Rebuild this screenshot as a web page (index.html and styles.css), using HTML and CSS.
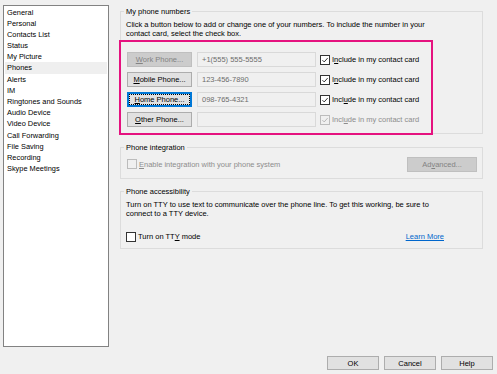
FILE: index.html
```html
<!DOCTYPE html>
<html>
<head>
<meta charset="utf-8">
<link rel="stylesheet" href="styles.css">
</head>
<body>
<div class="window">
  <div class="main">
    <ul class="nav">
      <li>General</li>
      <li>Personal</li>
      <li>Contacts List</li>
      <li>Status</li>
      <li>My Picture</li>
      <li class="selected">Phones</li>
      <li>Alerts</li>
      <li>IM</li>
      <li>Ringtones and Sounds</li>
      <li>Audio Device</li>
      <li>Video Device</li>
      <li>Call Forwarding</li>
      <li>File Saving</li>
      <li>Recording</li>
      <li>Skype Meetings</li>
    </ul>
    <div class="content">
      <fieldset class="group group-numbers">
        <legend>My phone numbers</legend>
        <p class="desc">Click a button below to add or change one of your numbers. To include the number in your contact card, select the check box.</p>
        <div class="phones">
          <div class="phone-row">
            <span class="btn btn-disabled btn-phone"><u>W</u>ork Phone...</span>
            <span class="field">+1(555) 555-5555</span>
            <span class="check checked"><svg viewBox="0 0 10 10"><path d="M1.8 5.2 L4 7.4 L8.3 2.6"/></svg></span>
            <span class="check-label">I<u>n</u>clude in my contact card</span>
          </div>
          <div class="phone-row">
            <span class="btn btn-phone"><u>M</u>obile Phone...</span>
            <span class="field">123-456-7890</span>
            <span class="check checked"><svg viewBox="0 0 10 10"><path d="M1.8 5.2 L4 7.4 L8.3 2.6"/></svg></span>
            <span class="check-label">I<u>n</u>clude in my contact card</span>
          </div>
          <div class="phone-row">
            <span class="btn btn-phone btn-focus"><span class="focus-ring"><u>H</u>ome Phone...</span></span>
            <span class="field">098-765-4321</span>
            <span class="check checked"><svg viewBox="0 0 10 10"><path d="M1.8 5.2 L4 7.4 L8.3 2.6"/></svg></span>
            <span class="check-label">Incl<u>u</u>de in my contact card</span>
          </div>
          <div class="phone-row">
            <span class="btn btn-phone"><u>O</u>ther Phone...</span>
            <span class="field"></span>
            <span class="check checked check-disabled"><svg viewBox="0 0 10 10"><path d="M1.8 5.2 L4 7.4 L8.3 2.6"/></svg></span>
            <span class="check-label label-disabled">Incl<u>u</u>de in my contact card</span>
          </div>
        </div>
      </fieldset>

      <fieldset class="group group-integration">
        <legend>Phone integration</legend>
        <div class="integration-row">
          <span class="check check-disabled"></span>
          <span class="check-label label-disabled"><u>E</u>nable integration with your phone system</span>
          <span class="btn btn-disabled btn-advanced">Ad<u>v</u>anced...</span>
        </div>
      </fieldset>

      <fieldset class="group group-access">
        <legend>Phone accessibility</legend>
        <p class="desc">Turn on TTY to use text to communicate over the phone line. To get this working, be sure to connect to a TTY device.</p>
        <div class="tty-row">
          <span class="check"></span>
          <span class="check-label">Turn on TT<u>Y</u> mode</span>
          <a class="link" href="#">Learn More</a>
        </div>
      </fieldset>
    </div>
  </div>
  <div class="footer">
    <span class="btn btn-footer">OK</span>
    <span class="btn btn-footer">Cancel</span>
    <span class="btn btn-footer">Help</span>
  </div>
</div>
</body>
</html>
```

FILE: styles.css
```css
html, body {
  margin: 0;
  padding: 0;
}
body {
  width: 497px;
  height: 374px;
  background: #f0f0f0;
  font-family: "Liberation Sans", Arial, sans-serif;
  font-size: 7.5px;
  color: #000;
  overflow: hidden;
}
.window {
  display: flex;
  flex-direction: column;
  padding: 5px 4px 0 3px;
}
.main {
  display: flex;
  gap: 11px;
}
.nav {
  list-style: none;
  margin: 0;
  padding: 0.5px 1px 0;
  width: 106px;
  height: 342px;
  box-sizing: border-box;
  background: #fff;
  border: 1px solid #828282;
  font-size: 7.4px;
}
.nav li {
  line-height: 11.2px;
  height: 11.2px;
  padding-left: 2px;
  white-space: nowrap;
}
.nav li.selected {
  background: #efefef;
}
.content {
  width: 363px;
  display: flex;
  flex-direction: column;
}
.group {
  margin: 0;
  padding: 0 5px 0 4px;
  border: 1px solid #dcdcdc;
  min-width: 0;
}
.group legend {
  padding: 0 2px;
  margin-left: -1px;
  line-height: 9px;
  color: #000;
}
.group-numbers {
  margin-top: 1.5px;
  padding-bottom: 0;
}
.desc {
  margin: 4px 0 0 1px;
  line-height: 9.4px;
  max-width: 318px;
}
.phones {
  margin: 2px 0 -2px -6px;
  width: 314px;
  box-sizing: border-box;
  border: 2px solid #e5127f;
  padding: 10px 0 6px 6px;
  display: flex;
  flex-direction: column;
  gap: 5px;
  position: relative;
}
.phone-row {
  display: flex;
  align-items: center;
  height: 15px;
}
.btn {
  display: inline-flex;
  align-items: center;
  justify-content: center;
  box-sizing: border-box;
  background: #e1e1e1;
  border: 1px solid #adadad;
  height: 15px;
  color: #000;
  white-space: nowrap;
}
.btn-phone {
  width: 65px;
}
.btn-disabled {
  background: #cccccc;
  border-color: #bfbfbf;
  color: #838383;
}
.btn-focus {
  border-color: #0078d7;
  box-shadow: inset 0 0 0 1px #0078d7;
}
.focus-ring {
  outline: 1px dotted #000;
  outline-offset: 0;
  padding: 0 4px;
  line-height: 9px;
}
.field {
  margin-left: 5px;
  width: 119px;
  height: 15px;
  box-sizing: border-box;
  border: 1px solid #d9d9d9;
  background: #f0f0f0;
  color: #6d6d6d;
  padding-left: 4px;
  line-height: 13px;
}
.check {
  width: 10px;
  height: 10px;
  box-sizing: border-box;
  border: 1px solid #333;
  background: #fff;
  flex: none;
  display: inline-block;
}
.check svg {
  display: block;
  width: 8px;
  height: 8px;
}
.check svg path {
  fill: none;
  stroke: #000;
  stroke-width: 1;
}
.phone-row .check {
  margin-left: 4px;
}
.check-disabled {
  border-color: #bcbcbc;
  background: #f0f0f0;
}
.check-disabled svg path {
  stroke: #a8a8a8;
}
.check-label {
  margin-left: 2px;
  white-space: nowrap;
}
.label-disabled {
  color: #8d8d8d;
}
.group-integration {
  margin-top: 9px;
  padding-bottom: 6px;
}
.integration-row {
  display: flex;
  align-items: center;
  margin-top: 4.5px;
  padding-left: 2px;
}
.btn-advanced {
  margin-left: auto;
  width: 70px;
}
.group-access {
  margin-top: 8px;
  padding-bottom: 6px;
}
.tty-row {
  display: flex;
  align-items: center;
  margin-top: 13px;
  padding-left: 1px;
  height: 10px;
}
.link {
  margin-left: auto;
  margin-right: 33px;
  color: #0066cc;
  text-decoration: underline;
}
.footer {
  display: flex;
  justify-content: flex-end;
  gap: 5px;
  margin-top: 9px;
}
.btn-footer {
  width: 52px;
  height: 14px;
}
```
